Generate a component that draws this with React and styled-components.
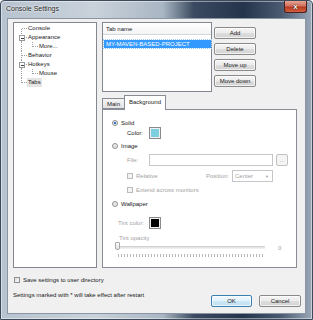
import React from "react";
import styled, { createGlobalStyle } from "styled-components";

const GlobalStyle = createGlobalStyle`
  html, body {
    margin: 0;
    padding: 0;
    background: #ffffff;
  }
  body {
    font-family: "Liberation Sans", Arial, sans-serif;
    font-size: 6px;
    color: #1a1a1a;
  }
`;

const Window = styled.div`
  width: 313px;
  height: 320px;
  box-sizing: border-box;
  display: flex;
  flex-direction: column;
  padding: 0 6px 5px 6px;
  border: 1px solid #3d4a5c;
  border-radius: 4px 4px 0 0;
  background: linear-gradient(90deg, #b7c3cf 0%, #c9d2db 30%, #a9b6c3 52%, #3b4a60 62%, #24344a 78%, #4a5a70 90%, #9aa8b8 100%);
  box-shadow: inset 0 0 0 1px rgba(255, 255, 255, 0.45);
`;

const TitleBar = styled.div`
  height: 18px;
  display: flex;
  align-items: flex-start;
  justify-content: space-between;
`;

const Title = styled.span`
  margin: 4px 0 0 -1px;
  font-size: 7px;
  color: #1c1c1c;
  text-shadow: 0 0 3px #ffffff, 0 0 2px #ffffff;
`;

const CloseButton = styled.div`
  width: 23px;
  height: 12px;
  margin-right: -1px;
  box-sizing: border-box;
  border: 1px solid #4a2020;
  border-top: none;
  border-radius: 0 0 3px 3px;
  background: linear-gradient(#e8a493 0%, #d0705c 45%, #b73a22 55%, #d2603f 100%);
  display: flex;
  align-items: center;
  justify-content: center;
  color: #ffffff;
  font-size: 8px;
  font-weight: bold;
  text-shadow: 0 0 1px #300, 0 0 1px #300;
`;

const Client = styled.div`
  flex: 1;
  background: #f0f0f0;
  border: 1px solid #8a96a4;
  display: flex;
  flex-direction: column;
  padding: 3px 4px 6px 5px;
`;

const MainRow = styled.div`
  display: flex;
  padding-right: 4px;
`;

const Tree = styled.div`
  width: 84px;
  height: 246px;
  box-sizing: border-box;
  border: 1px solid #828790;
  background: #ffffff;
  padding: 1px 0 0 3px;
`;

const TreeRow = styled.div`
  height: 9px;
  display: flex;
  align-items: center;
`;

const TreeLabel = styled.span`
  padding: 0 1px;
  line-height: 9px;
  background: ${(p) => (p.$selected ? "#e4e4e4" : "transparent")};
`;

const RightColumn = styled.div`
  margin-left: 5px;
  flex: 1;
  display: flex;
  flex-direction: column;
`;

const ListRow = styled.div`
  display: flex;
`;

const ListBox = styled.div`
  width: 110px;
  height: 70px;
  box-sizing: border-box;
  border: 1px solid #828790;
  background: #ffffff;
`;

const ListHeader = styled.div`
  height: 12px;
  box-sizing: border-box;
  border-bottom: 1px solid #d5d5d5;
  background: linear-gradient(#ffffff, #f3f4f6);
  padding-left: 3px;
  line-height: 12px;
`;

const ListItem = styled.div`
  margin: 5px 0 0 1px;
  height: 8px;
  line-height: 8px;
  padding-left: 2px;
  background: #3399ff;
  color: #ffffff;
  outline: 1px dotted #99ccff;
  white-space: nowrap;
`;

const ButtonColumn = styled.div`
  margin-left: 2px;
  padding-top: 5px;
  display: flex;
  flex-direction: column;
  gap: 4px;
`;

const Button = styled.div`
  width: ${(p) => p.$w || 42}px;
  height: 12px;
  box-sizing: border-box;
  border: 1px solid ${(p) => (p.$default ? "#3c7fb1" : "#8a8a8a")};
  border-radius: 2px;
  background: ${(p) =>
    p.$default
      ? "linear-gradient(#f0f8fd 0%, #e3f2fb 50%, #cfe8f7 51%, #bddff3 100%)"
      : "linear-gradient(#f4f4f4 0%, #ececec 50%, #dedede 51%, #d2d2d2 100%)"};
  box-shadow: inset 0 0 0 1px rgba(255, 255, 255, 0.7);
  display: flex;
  align-items: center;
  justify-content: center;
  color: #222;
`;

const TabStrip = styled.div`
  margin-top: 3px;
  height: 14px;
  display: flex;
  align-items: flex-end;
`;

const Tab = styled.div`
  height: ${(p) => (p.$active ? 15 : 11)}px;
  margin-bottom: ${(p) => (p.$active ? -1 : 0)}px;
  box-sizing: border-box;
  padding: 0 4px;
  border: 1px solid #898c95;
  border-bottom: ${(p) => (p.$active ? "none" : "1px solid #898c95")};
  background: ${(p) => (p.$active ? "#ffffff" : "linear-gradient(#f4f4f4, #e3e3e3)")};
  display: flex;
  align-items: ${(p) => (p.$active ? "flex-start" : "center")};
  padding-top: ${(p) => (p.$active ? 3 : 0)}px;
  position: relative;
  z-index: ${(p) => (p.$active ? 2 : 1)};
  margin-right: ${(p) => (p.$active ? 0 : -1)}px;
`;

const Panel = styled.div`
  height: 159px;
  box-sizing: border-box;
  border: 1px solid #898c95;
  background: #ffffff;
  padding: 8px 0 0 9px;
  display: flex;
  flex-direction: column;
`;

const Row = styled.div`
  display: flex;
  align-items: center;
  height: ${(p) => p.$h || 9}px;
  margin-top: ${(p) => p.$mt || 0}px;
  padding-left: ${(p) => p.$indent || 0}px;
  color: ${(p) => (p.$disabled ? "#a3a3a3" : "#1a1a1a")};
`;

const Radio = styled.span`
  width: 6px;
  height: 6px;
  box-sizing: border-box;
  border-radius: 50%;
  border: 1px solid #8e8f8f;
  background: ${(p) =>
    p.$checked
      ? "radial-gradient(circle, #1d5ab5 0%, #4a8fe0 45%, #e8e8e8 55%, #f4f4f4 100%)"
      : "radial-gradient(circle, #dcdcdc 0%, #f6f6f6 100%)"};
  margin-right: 3px;
  flex: none;
`;

const CheckBox = styled.span`
  width: 6px;
  height: 6px;
  box-sizing: border-box;
  border: 1px solid ${(p) => (p.$disabled ? "#bcbcbc" : "#8e8f8f")};
  background: ${(p) => (p.$disabled ? "#f4f4f4" : "linear-gradient(135deg, #dcdcdc, #fafafa)")};
  margin-right: 3px;
  flex: none;
`;

const FieldLabel = styled.span`
  width: ${(p) => p.$w}px;
  flex: none;
`;

const Swatch = styled.span`
  width: 12px;
  height: 12px;
  box-sizing: border-box;
  border: 1px solid #8a8a8a;
  box-shadow: inset 0 0 0 1px #f0f0f0;
  background: ${(p) => p.$color};
`;

const TextBox = styled.span`
  width: ${(p) => p.$w}px;
  height: 12px;
  box-sizing: border-box;
  border: 1px solid #c4c6cb;
  background: #ffffff;
  display: flex;
  align-items: center;
  padding-left: 2px;
  color: #a3a3a3;
  flex: none;
`;

const SmallButton = styled.span`
  width: 12px;
  height: 12px;
  margin-left: 3px;
  box-sizing: border-box;
  border: 1px solid #c2c2c2;
  border-radius: 2px;
  background: #f4f4f4;
  display: flex;
  align-items: center;
  justify-content: center;
  color: #a3a3a3;
`;

const Select = styled(TextBox)`
  justify-content: space-between;
  padding-right: 3px;
`;

const SliderTrack = styled.div`
  position: relative;
  width: 147px;
  height: 3px;
  margin-left: 6px;
  box-sizing: border-box;
  border-top: 1px solid #d2d2d2;
  border-bottom: 1px solid #f0f0f0;
  background: #e6e6e6;
`;

const SliderThumb = styled.span`
  position: absolute;
  left: -3px;
  top: -5px;
  width: 5px;
  height: 8px;
  box-sizing: border-box;
  border: 1px solid #a8a8a8;
  border-radius: 1px 1px 2px 2px;
  background: linear-gradient(#fbfbfb, #e6e6e6);
`;

const Ticks = styled.div`
  width: 146px;
  height: 3px;
  margin: 5px 0 0 6px;
  background: repeating-linear-gradient(90deg, #b8b8b8 0 1px, transparent 1px 3px);
`;

const SliderRow = styled.div`
  display: flex;
  align-items: center;
  margin-top: 4px;
  height: 3px;
`;

const SliderValue = styled.span`
  margin-left: 13px;
  color: #a3a3a3;
`;

const SaveRow = styled.div`
  display: flex;
  align-items: center;
  height: 10px;
  margin-top: 7px;
  padding-left: 1px;
`;

const FooterRow = styled.div`
  height: 22px;
  display: flex;
  justify-content: space-between;
`;

const Note = styled.span`
  margin-top: 6px;
  line-height: 9px;
`;

const FooterButtons = styled.div`
  align-self: flex-end;
  display: flex;
  gap: 7px;
`;

function TreeLines({ depth, first, last, expander, childLast }) {
  const w = depth === 0 ? 10 : 21;
  return (
    <svg width={w} height="9" style={{ flex: "none" }} shapeRendering="crispEdges">
      <line
        x1="4.5"
        y1={first ? 4.5 : 0}
        x2="4.5"
        y2={last ? 4.5 : 9}
        stroke="#a0a0a0"
        strokeDasharray="1 1"
      />
      {depth === 0 && <line x1="4.5" y1="4.5" x2="10" y2="4.5" stroke="#a0a0a0" strokeDasharray="1 1" />}
      {depth === 1 && (
        <>
          <line x1="15.5" y1="0" x2="15.5" y2={childLast ? 4.5 : 9} stroke="#a0a0a0" strokeDasharray="1 1" />
          <line x1="15.5" y1="4.5" x2="21" y2="4.5" stroke="#a0a0a0" strokeDasharray="1 1" />
        </>
      )}
      {expander && (
        <>
          <rect x="2.5" y="2.5" width="5" height="5" fill="#ffffff" stroke="#9a9a9a" />
          <line x1="3.5" y1="5" x2="6.5" y2="5" stroke="#404040" />
        </>
      )}
    </svg>
  );
}

const treeItems = [
  { label: "Console", depth: 0, first: true },
  { label: "Appearance", depth: 0, expander: true },
  { label: "More...", depth: 1, childLast: true },
  { label: "Behavior", depth: 0 },
  { label: "Hotkeys", depth: 0, expander: true },
  { label: "Mouse", depth: 1, childLast: true },
  { label: "Tabs", depth: 0, last: true, selected: true },
];

export default function App() {
  return (
    <>
      <GlobalStyle />
      <Window>
        <TitleBar>
          <Title>Console Settings</Title>
          <CloseButton>x</CloseButton>
        </TitleBar>
        <Client>
          <MainRow>
            <Tree>
              {treeItems.map((item) => (
                <TreeRow key={item.label}>
                  <TreeLines {...item} />
                  <TreeLabel $selected={item.selected}>{item.label}</TreeLabel>
                </TreeRow>
              ))}
            </Tree>
            <RightColumn>
              <ListRow>
                <ListBox>
                  <ListHeader>Tab name</ListHeader>
                  <ListItem>MY-MAVEN-BASED-PROJECT</ListItem>
                </ListBox>
                <ButtonColumn>
                  <Button>Add</Button>
                  <Button>Delete</Button>
                  <Button>Move up</Button>
                  <Button>Move down</Button>
                </ButtonColumn>
              </ListRow>
              <TabStrip>
                <Tab>Main</Tab>
                <Tab $active>Background</Tab>
              </TabStrip>
              <Panel>
                <Row>
                  <Radio $checked />
                  Solid
                </Row>
                <Row $h={12} $indent={15}>
                  <FieldLabel $w={22}>Color:</FieldLabel>
                  <Swatch $color="#7ccfe0" />
                </Row>
                <Row $mt={2}>
                  <Radio />
                  Image
                </Row>
                <Row $h={12} $indent={15} $mt={4} $disabled>
                  <FieldLabel $w={22}>File:</FieldLabel>
                  <TextBox $w={124} />
                  <SmallButton>...</SmallButton>
                </Row>
                <Row $h={12} $indent={15} $mt={4} $disabled>
                  <CheckBox $disabled />
                  <FieldLabel $w={70}>Relative</FieldLabel>
                  <FieldLabel $w={26}>Position:</FieldLabel>
                  <Select $w={41}>
                    Center
                    <span style={{ fontSize: "4px" }}>▼</span>
                  </Select>
                </Row>
                <Row $indent={15} $mt={3} $disabled>
                  <CheckBox $disabled />
                  Extend across monitors
                </Row>
                <Row $mt={5}>
                  <Radio />
                  Wallpaper
                </Row>
                <Row $h={12} $indent={6} $mt={9} $disabled>
                  <FieldLabel $w={31}>Tint color:</FieldLabel>
                  <Swatch $color="#000000" />
                </Row>
                <Row $indent={7} $mt={4} $disabled>
                  Tint opacity
                </Row>
                <SliderRow>
                  <SliderTrack>
                    <SliderThumb />
                  </SliderTrack>
                  <SliderValue>0</SliderValue>
                </SliderRow>
                <Ticks />
              </Panel>
            </RightColumn>
          </MainRow>
          <SaveRow>
            <CheckBox />
            Save settings to user directory
          </SaveRow>
          <FooterRow>
            <Note>Settings marked with * will take effect after restart</Note>
            <FooterButtons>
              <Button $w={41} $default>OK</Button>
              <Button $w={42}>Cancel</Button>
            </FooterButtons>
          </FooterRow>
        </Client>
      </Window>
    </>
  );
}
